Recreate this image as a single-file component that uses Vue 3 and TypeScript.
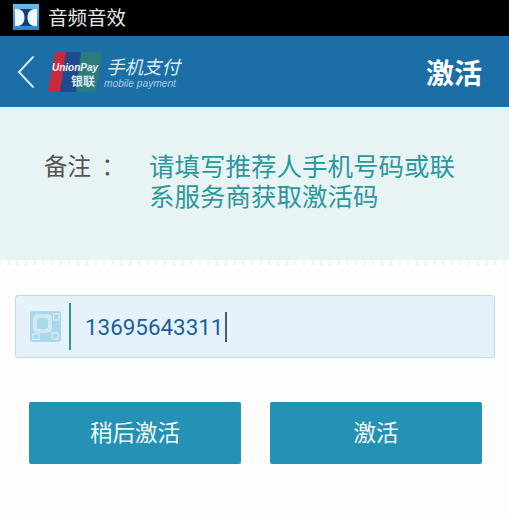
<script setup lang="ts">
const title = '音频音效'
const note = '请填写推荐人手机号码或联系服务商获取激活码'
const phone = '13695643311'
</script>

<template>
  <div class="screen">
    <div class="status">
      <svg class="dolby" viewBox="0 0 26 26">
        <defs>
          <linearGradient id="dg" x1="0" y1="0" x2="0" y2="1">
            <stop offset="0" stop-color="#6fbbe8" />
            <stop offset="1" stop-color="#2a86c8" />
          </linearGradient>
        </defs>
        <rect width="26" height="26" fill="url(#dg)" />
        <rect x="2" y="5" width="22" height="17" fill="#123f78" />
        <path d="M2 5h2.500c4.500 0 7 4 7 8.500S9 22 4.500 22H2zM24 5h-2.500c-4.500 0-7 4-7 8.500S17 22 21.500 22H24z" fill="#eef7fc" />
      </svg>
      <span class="status-title">{{ title }}</span>
    </div>

    <header class="topbar">
      <svg class="back" viewBox="0 0 18 34">
        <path d="M16.500 1.500 2 17l14.500 15.500" fill="none" stroke="#d8e8f2" stroke-width="2" />
      </svg>
      <svg class="unionpay" viewBox="0 0 56 42">
        <path d="M9 1h11l-7 40H2a2 2 0 0 1-2-2L7 3a2 2 0 0 1 2-2z" fill="#c9293f" />
        <path d="M18 1h17l-6 40H12z" fill="#1f4b8c" />
        <path d="M33 1h19a2 2 0 0 1 2 2l-6 36a2 2 0 0 1-2 2H28z" fill="#2b7d7c" />
        <text x="4" y="20" class="up-en">UnionPay</text>
        <text x="23" y="35" class="up-cn">银联</text>
      </svg>
      <div class="brand">
        <span class="brand-cn">手机支付</span>
        <span class="brand-en">mobile payment</span>
      </div>
      <h1 class="page-title">激活</h1>
    </header>

    <section class="note">
      <span class="note-label">备注&nbsp;&nbsp;：</span>
      <p class="note-text">{{ note }}</p>
    </section>
    <div class="dots"></div>

    <main class="content">
      <div class="field">
        <svg class="scan" viewBox="0 0 31 31">
          <rect width="31" height="31" rx="3" fill="#a8d8ec" />
          <rect x="3" y="3" width="19" height="19" rx="5" fill="#cfe9f5" />
          <rect x="7" y="7" width="11" height="11" rx="2.500" fill="#a8d8ec" />
          <rect x="23.500" y="3" width="5.500" height="6" fill="#a8d8ec" stroke="#e2f2fa" />
          <rect x="3" y="23" width="6" height="5.500" fill="#a8d8ec" stroke="#e2f2fa" />
          <rect x="22" y="22" width="6" height="6" fill="#a8d8ec" stroke="#e2f2fa" />
        </svg>
        <span class="divider"></span>
        <span class="phone">{{ phone }}</span>
        <span class="caret"></span>
      </div>

      <div class="actions">
        <button class="btn" type="button">稍后激活</button>
        <button class="btn" type="button">激活</button>
      </div>
    </main>
  </div>
</template>

<style>
html, body { margin: 0; background: #fdfdfd; }
</style>

<style scoped>
.screen {
  width: 509px;
  height: 518px;
  overflow: hidden;
  background: #fdfdfd;
  font-family: "Noto Sans CJK SC", "Roboto", sans-serif;
}
.status {
  height: 36px;
  background: #000;
  display: flex;
  align-items: center;
  padding-left: 13px;
  box-sizing: border-box;
}
.dolby { width: 26px; height: 26px; display: block; margin-top: -2px; }
.status-title {
  margin-left: 9px;
  color: #e8e8e8;
  font-size: 19.500px;
  line-height: 36px;
  margin-top: -3px;
}
.topbar {
  height: 71px;
  box-sizing: border-box;
  background: #1c6ea6;
  display: flex;
  align-items: center;
  padding: 0 27px 0 17px;
}
.back { width: 18px; height: 34px; display: block; }
.unionpay { width: 56px; height: 42px; display: block; margin-left: 13px; }
.up-en {
  font-family: "Liberation Sans", sans-serif;
  font-style: italic;
  font-weight: 700;
  font-size: 10px;
  fill: #f4f4f4;
}
.up-cn { font-size: 12px; font-weight: 700; fill: #dfe8f0; }
.brand {
  display: flex;
  flex-direction: column;
  margin-left: 0;
  color: #dcebf5;
}
.brand-cn {
  font-size: 18.500px;
  font-style: italic;
  line-height: 24px;
  padding-left: 2px;
}
.brand-en {
  font-family: "Liberation Sans", sans-serif;
  font-style: italic;
  font-size: 10.200px;
  line-height: 12px;
  color: #a9cbe2;
}
.page-title {
  margin: 0 0 0 auto;
  color: #fff;
  font-size: 28px;
  font-weight: 700;
  line-height: 1;
}
.note {
  height: 153px;
  box-sizing: border-box;
  background: #e8f4f4;
  display: flex;
  padding: 44px 50px 0 44px;
  font-size: 25.500px;
  line-height: 30px;
}
.note-label {
  width: 105px;
  flex: none;
  font-size: 23.500px;
  color: #555;
  white-space: nowrap;
  margin-top: -1px;
}
.note-text { margin: -1px 0 0; color: #2d979f; }
.dots {
  height: 5px;
  background-color: #eff7f7;
  background-image: radial-gradient(circle at center, #fdfdfd 3px, transparent 3.500px);
  background-size: 8.700px 5px;
}
.content { padding: 30px 14px 0 15px; }
.field {
  height: 63px;
  box-sizing: border-box;
  border: 1px solid #b9dcf0;
  border-radius: 3px;
  background: #e6f2fb;
  display: flex;
  align-items: center;
  padding-left: 14px;
}
.scan { width: 31px; height: 31px; display: block; }
.divider {
  width: 2px;
  height: 47px;
  margin-left: 8px;
  background: #2d8f9a;
}
.phone {
  margin-left: 14px;
  font-family: "Roboto", sans-serif;
  font-size: 22.400px;
  color: #1c5f98;
}
.caret {
  width: 1.500px;
  height: 30px;
  margin-left: 2px;
  background: #4a5a68;
}
.actions {
  display: flex;
  justify-content: space-between;
  padding: 44px 13px 0 14px;
}
.btn {
  width: 212px;
  height: 62px;
  border: 0;
  border-radius: 2px;
  background: #2591b5;
  color: #f4fafc;
  font-family: inherit;
  font-size: 22.500px;
  padding: 0 0 5px;
}
</style>
